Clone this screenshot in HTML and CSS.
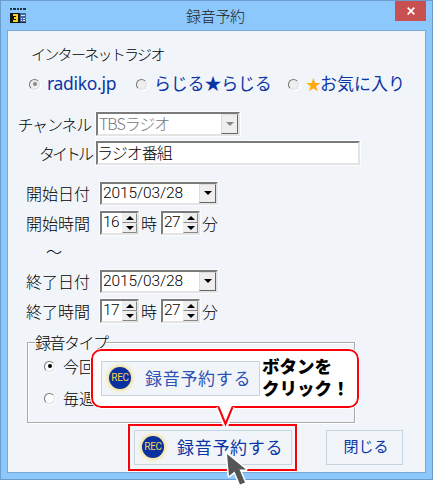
FILE: index.html
```
<!DOCTYPE html>
<html lang="ja">
<head>
    <meta charset="UTF-8">
    <title>録音予約</title>
    <link rel="stylesheet" href="styles.css">
</head>
<body>
    <div class="window">
        <div class="titlebar">
            <svg class="app-icon" width="16" height="16" viewBox="0 0 16 16" shape-rendering="crispEdges">
                <path d="M0 1h2M3 1h3M7 1h2M10 1h2M13 1h3" stroke="#1d3346" stroke-width="2"/>
                <rect y="5" width="10" height="10" fill="#151515"/>
                <path d="M3 7h4v6H3M4 10h3" fill="none" stroke="#f5d21f" stroke-width="1.5"/>
                <rect x="10" y="5" width="6" height="10" fill="#4567a0"/>
                <path d="M11 7h4M11 10h1M13 10h2M11 12h1M13 12h2" stroke="#dbe6f4"/>
                <path d="M10 14.5h6" stroke="#222"/>
            </svg>
            <h1>録音予約</h1>
            <button class="close" aria-label="閉じる">
                <svg width="8" height="8" viewBox="0 0 8 8"><path d="M.7.7l6.6 6.6M7.3.7L.7 7.3" stroke="#fff" stroke-width="1.7"/></svg>
            </button>
        </div>

        <div class="client">
            <div class="heading">インターネットラジオ</div>
            <div class="sources">
                <span class="radio disabled checked"></span><span class="source radiko">radiko.jp</span>
                <span class="radio disabled"></span><span class="source rajiru">らじる★らじる</span>
                <span class="radio disabled"></span><span class="source favorite"><b>★</b>お気に入り</span>
            </div>

            <div class="row channel">
                <span class="label">チャンネル</span>
                <div class="field select disabled"><span>TBSラジオ</span><i class="drop"></i></div>
            </div>
            <div class="row title">
                <span class="label">タイトル</span>
                <div class="field"><span>ラジオ番組</span></div>
            </div>

            <div class="row date">
                <span class="label">開始日付</span>
                <div class="field select"><span>2015/03/28</span><i class="drop"></i></div>
            </div>
            <div class="row time">
                <span class="label">開始時間</span>
                <div class="field spin"><span>16</span><div class="arrows"><i class="up"></i><i class="down"></i></div></div>
                <span class="unit">時</span>
                <div class="field spin"><span>27</span><div class="arrows"><i class="up"></i><i class="down"></i></div></div>
                <span class="unit">分</span>
            </div>
            <div class="tilde">～</div>
            <div class="row date">
                <span class="label">終了日付</span>
                <div class="field select"><span>2015/03/28</span><i class="drop"></i></div>
            </div>
            <div class="row time end">
                <span class="label">終了時間</span>
                <div class="field spin"><span>17</span><div class="arrows"><i class="up"></i><i class="down"></i></div></div>
                <span class="unit">時</span>
                <div class="field spin"><span>27</span><div class="arrows"><i class="up"></i><i class="down"></i></div></div>
                <span class="unit">分</span>
            </div>

            <div class="group">
                <div class="legend">録音タイプ</div>
                <div class="option"><span class="radio checked"></span><span>今回</span></div>
                <div class="option"><span class="radio"></span><span>毎週</span></div>
            </div>

            <div class="buttons">
                <div class="highlight">
                    <button class="btn record"><span class="rec">REC</span><span>録音予約する</span></button>
                </div>
                <button class="btn cancel">閉じる</button>
            </div>
        </div>
    </div>

    <div class="callout">
        <div class="btn record"><span class="rec">REC</span><span>録音予約する</span></div>
        <p>ボタンを<br>クリック！</p>
        <svg class="tail" width="20" height="22" viewBox="0 0 20 22">
            <path d="M2 1L9.500 20L17 1" fill="none" stroke="#fff" stroke-width="5"/>
            <path d="M3 0V2L9.500 18L16 2V0Z" fill="#fff"/>
            <path d="M2.500 1L9.500 18L16.500 1" fill="none" stroke="#fb0007" stroke-width="2"/>
        </svg>
    </div>

    <svg class="cursor" width="24" height="36" viewBox="0 0 24 36">
        <path d="M2 2L4 24L9.500 19.500L15 32.500L20 30.500L14.500 17.500H21Z" fill="#555" stroke="#fff" stroke-width="3" stroke-linejoin="round" paint-order="stroke"/>
    </svg>
</body>
</html>
```
FILE: styles.css
```
* {
    margin: 0;
    padding: 0;
    box-sizing: border-box;
}

body {
    position: relative;
    width: 433px;
    height: 488px;
    overflow: hidden;
    background: #fff;
    color: #000;
    font-family: "Noto Sans CJK JP", sans-serif;
    font-weight: 300;
    font-size: 16px;
    line-height: 20px;
    white-space: nowrap;
}

button {
    font: inherit;
}

.window {
    height: 480px;
    padding: 0 6px;
    border: 1px solid #6c9ccb;
    background: #8cc8fb;
}

.titlebar {
    display: flex;
    height: 29px;
    padding-left: 3px;
}

.app-icon {
    margin-top: 7px;
}

.titlebar h1 {
    margin-left: 160px;
    font-size: 15px;
    font-weight: 300;
    line-height: 30px;
    letter-spacing: -0.3px;
    color: #222;
}

.close {
    display: flex;
    align-items: center;
    justify-content: center;
    width: 31px;
    height: 20px;
    margin-left: auto;
    border: none;
    background: #c85051;
}

.client {
    height: 443px;
    border: 1px solid #79aad6;
    background: #f1f5f9;
}

.heading {
    margin: 13px 0 0 23px;
    font-size: 15px;
    letter-spacing: -1.7px;
}

.sources {
    display: flex;
    align-items: center;
    height: 22px;
    margin: 9px 0 0 21px;
}

.radio {
    flex: none;
    position: relative;
    width: 11px;
    height: 11px;
    border: 1px solid;
    border-color: #777 #ddd #ddd #777;
    border-radius: 50%;
    background: #fff;
    box-shadow: 1px 1px 0 #fff;
}

.radio.disabled {
    background: #eee;
}

.radio.checked::after {
    content: "";
    position: absolute;
    left: 2.5px;
    top: 2.5px;
    width: 4px;
    height: 4px;
    border-radius: 50%;
    background: #000;
}

.radio.disabled.checked::after {
    background: #888;
}

.source {
    margin-left: 7px;
    padding-bottom: 2px;
    font-size: 17px;
    font-weight: 400;
    color: #0b35a4;
}

.radiko {
    width: 89px;
    font-family: "Noto Sans", sans-serif;
    font-size: 17.5px;
    letter-spacing: -0.3px;
}

.rajiru {
    width: 134px;
    letter-spacing: -0.2px;
}

.favorite b {
    display: inline-block;
    width: 14px;
    font-size: 15px;
    font-weight: 400;
    color: #ffa90b;
}

.row {
    display: flex;
    align-items: center;
    height: 24px;
}

.label {
    width: 83px;
    text-align: right;
}

.field {
    display: flex;
    height: 24px;
    border: 2px solid;
    border-color: #7b7b7b #e4e4e4 #e4e4e4 #7b7b7b;
    outline: 1px solid #fbfcfd;
    background: #fff;
}

.field > span {
    flex: 1;
    line-height: 19px;
}

.channel {
    margin-top: 17px;
}

.channel .label,
.title .label {
    letter-spacing: -1.2px;
}

.title .label {
    letter-spacing: -3px;
    padding-right: 0;
}

.channel .field,
.title .field {
    margin-left: 5px;
    letter-spacing: -1px;
}

.channel .field {
    width: 144px;
    padding-left: 1px;
    color: #777;
}

.title {
    margin-top: 5px;
}

.title .field {
    width: 264px;
}

.title .field > span {
    margin-left: -1px;
}

.drop {
    display: flex;
    align-items: center;
    justify-content: center;
    width: 17px;
    border: 1px solid;
    border-color: #ddd #666 #666 #ddd;
    background: #eee;
}

.drop::after {
    content: "";
    border: 4px solid transparent;
    border-top-color: #000;
    border-bottom: none;
}

.disabled .drop::after {
    border-top-color: #888;
}

.date .label,
.time .label {
    width: 82px;
    letter-spacing: 0;
}

.date .field,
.time .field {
    margin-left: 10px;
    font-family: Roboto, sans-serif;
    font-weight: 300;
}

.title + .date {
    margin-top: 16px;
}

.date .field {
    width: 118px;
    height: 23px;
    padding-left: 1px;
    font-size: 15.5px;
    letter-spacing: -0.1px;
}

.time {
    margin-top: 6px;
}

.time .field {
    width: 39px;
    padding-left: 1px;
    font-size: 15.5px;
    letter-spacing: -0.7px;
}

.unit {
    width: 17px;
    margin-left: 2px;
}

.unit + .field.spin {
    margin-left: 3px;
}

.arrows {
    width: 15px;
}

.arrows i {
    display: flex;
    align-items: center;
    justify-content: center;
    height: 10px;
    border: 1px solid;
    border-color: #eee #888 #888 #eee;
    background: #eee;
}

.arrows i::after {
    content: "";
    border: 4px solid transparent;
    border-bottom-width: 0;
    border-top-color: #000;
}

.arrows .up::after {
    transform: scaleY(-1);
}

.tilde {
    height: 34px;
    padding: 6px 0 0 38px;
}

.group {
    width: 328px;
    height: 81px;
    margin: 19px 0 0 19px;
    border: 1px solid #aaa;
    box-shadow: 1px 1px 0 #fff, inset 1px 1px 0 #fff;
}

.legend {
    width: 71px;
    margin: -11px 0 0 7px;
    background: #f1f5f9;
    letter-spacing: -1.5px;
}

.option {
    display: flex;
    align-items: center;
    height: 20px;
    margin: 4px 0 0 16px;
}

.option + .option {
    margin-top: 12px;
}

.option span + span {
    margin-left: 8px;
}

.buttons {
    display: flex;
    align-items: center;
    margin: 1px 0 0 120px;
}

.highlight {
    width: 169px;
    padding: 4px;
    border: 2px solid #fb0007;
    outline: 1px solid #fff;
}

.btn {
    display: flex;
    align-items: center;
    height: 35px;
    border: 1px solid #c5d4df;
    background: #f1f5f9;
    font-size: 17px;
    font-weight: 400;
    color: #0b35a4;
}

.record {
    width: 158px;
    padding-left: 7px;
    letter-spacing: 0.7px;
}

.record > span + span {
    padding-bottom: 2px;
}

.rec {
    display: flex;
    align-items: center;
    justify-content: center;
    width: 22px;
    height: 22px;
    margin: 0 14px 2px 0;
    border-radius: 50%;
    background: #0a2f9f;
    box-shadow: 0 0 4px 1px #f3d869;
    color: #f2d44c;
    font-family: Roboto, sans-serif;
    font-size: 10px;
    letter-spacing: -0.3px;
}

.highlight .rec {
    margin-right: 13px;
}

.cancel {
    justify-content: center;
    width: 77px;
    margin-left: 29px;
    padding: 0 0 3px 3px;
    font-size: 15px;
}

.callout {
    position: absolute;
    left: 91px;
    top: 349px;
    display: flex;
    align-items: center;
    width: 268px;
    height: 59px;
    padding-left: 8px;
    border: 2px solid #fb0007;
    border-radius: 10px;
    outline: 1px solid #fff;
    background: #fff;
}

.callout .record {
    width: 159px;
    color: #2e52b5;
}

.callout p {
    margin: 0 0 3px 2px;
    font-size: 17.5px;
    font-weight: 900;
    line-height: 22px;
}

.tail {
    position: absolute;
    left: 123px;
    top: 55px;
}

.cursor {
    position: absolute;
    left: 225px;
    top: 452px;
}
```
